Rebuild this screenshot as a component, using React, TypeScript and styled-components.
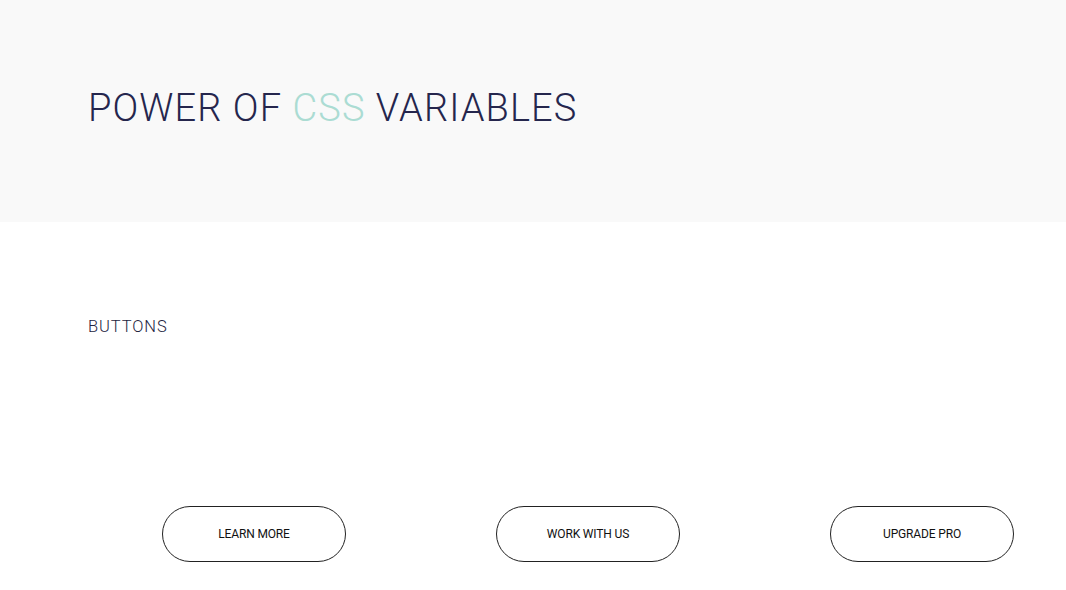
import React from "react";
import styled, { createGlobalStyle } from "styled-components";

const Global = createGlobalStyle`
  html, body { margin: 0; padding: 0; background: #ffffff; }
  body { font-family: Roboto, "Liberation Sans", Arial, sans-serif; overflow: hidden; }
`;

const Header = styled.header`
  background: #f9f9f9;
  height: 222px;
  box-sizing: border-box;
  padding: 87px 0 0 88px;
`;

const Title = styled.h1`
  margin: 0;
  font-family: Roboto, "Liberation Sans", Arial, sans-serif;
  font-weight: 300;
  font-size: 38px;
  line-height: 42px;
  letter-spacing: 1.1px;
  color: #25264d;
  white-space: nowrap;
`;

const Accent = styled.span`
  color: #abdcd3;
`;

const Section = styled.section`
  padding: 95px 0 0 88px;
`;

const SectionTitle = styled.h2`
  margin: 0;
  font-family: Roboto, "Liberation Sans", Arial, sans-serif;
  font-weight: 300;
  font-size: 16.5px;
  line-height: 20px;
  letter-spacing: 0.9px;
  color: #23243f;
`;

const ButtonRow = styled.div`
  display: grid;
  grid-template-columns: repeat(3, 334px);
  margin-top: 169px;
  margin-left: -1px;
`;

const Cell = styled.div`
  display: flex;
  justify-content: center;
`;

const PillButton = styled.button`
  width: 184px;
  height: 56px;
  border: 1px solid #222222;
  border-radius: 28px;
  background: #ffffff;
  color: #111111;
  font-family: Roboto, "Liberation Sans", Arial, sans-serif;
  font-weight: 400;
  font-size: 12px;
  letter-spacing: -0.15px;
  cursor: pointer;
  padding: 0;
`;

const labels = ["LEARN MORE", "WORK WITH US", "UPGRADE PRO"];

export default function App() {
  return (
    <>
      <Global />
      <Header>
        <Title>
          POWER OF <Accent>CSS</Accent> VARIABLES
        </Title>
      </Header>
      <Section>
        <SectionTitle>BUTTONS</SectionTitle>
        <ButtonRow>
          {labels.map((l) => (
            <Cell key={l}>
              <PillButton>{l}</PillButton>
            </Cell>
          ))}
        </ButtonRow>
      </Section>
    </>
  );
}
